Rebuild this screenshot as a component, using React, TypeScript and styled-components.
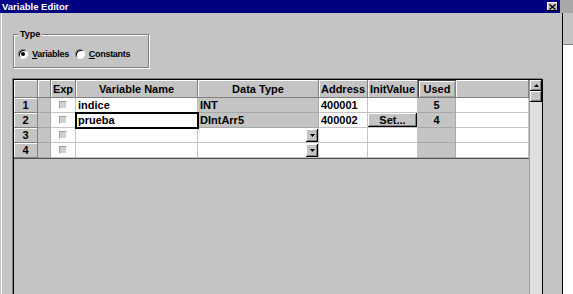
import React from "react";
import styled, { createGlobalStyle, css } from "styled-components";

const FACE = "#c4c4c4";
const SHADOW = "#808080";
const COLS = "24px 13px 25px 122px 121px 49px 50px 38px 1fr";

const GlobalStyle = createGlobalStyle`
  html, body {
    margin: 0;
    padding: 0;
    background: #ffffff;
  }
  body {
    font-family: "Liberation Sans", Arial, sans-serif;
    font-size: 11px;
    font-weight: 700;
    color: #000000;
  }
`;

const Screen = styled.div`
  display: flex;
  width: 573px;
  height: 294px;
  overflow: hidden;
`;

const Dialog = styled.div`
  width: 563px;
  flex: none;
  display: flex;
  flex-direction: column;
  background: #a8a8a8;
`;

const TitleBar = styled.div`
  width: 560px;
  height: 13px;
  flex: none;
  display: flex;
  align-items: center;
  justify-content: space-between;
  box-sizing: border-box;
  padding: 0 2px 0 2px;
  background: #000080;
  color: #ffffff;
  font-size: 9.5px;
  line-height: 13px;
`;

const CloseButton = styled.div`
  width: 11px;
  height: 9px;
  display: flex;
  align-items: center;
  justify-content: center;
  background: ${FACE};
  box-shadow: inset -1px -1px 0 #000000, inset 1px 1px 0 #ffffff;
`;

const DialogBody = styled.div`
  flex: 1;
  display: flex;
  flex-direction: column;
  align-items: flex-start;
  padding: 15px 0 0 13px;
  background: ${FACE};
  border-right: 1px solid #000000;
  box-shadow: inset 1px 0 0 ${FACE}, inset 2px 0 0 #ffffff;
`;

const GroupBox = styled.fieldset`
  margin: 0;
  min-width: 0;
  width: 136px;
  box-sizing: border-box;
  padding: 8px 0 7px 4px;
  border: 1px solid ${SHADOW};
  box-shadow: inset 1px 1px 0 #ffffff, 1px 1px 0 #ffffff;
  font-size: 9px;
  letter-spacing: -0.3px;
`;

const Legend = styled.legend`
  margin-left: 0;
  padding: 0 2px;
  line-height: 12px;
  letter-spacing: 0;
  background: ${FACE};
`;

const RadioRow = styled.div`
  display: flex;
  align-items: center;
  height: 12px;
`;

const RadioOption = styled.label`
  display: flex;
  align-items: center;
  gap: 4px;
  margin-right: 6px;
`;

const RadioCircle = styled.span<{ $checked?: boolean }>`
  width: 10px;
  height: 10px;
  box-sizing: border-box;
  border-radius: 50%;
  background: #ffffff;
  border: 1px solid;
  border-color: ${SHADOW} #ffffff #ffffff ${SHADOW};
  box-shadow: inset 1px 1px 0 #000000;
  display: flex;
  align-items: center;
  justify-content: center;
  &::after {
    content: "";
    width: 4px;
    height: 4px;
    border-radius: 50%;
    background: ${(p) => (p.$checked ? "#000000" : "transparent")};
  }
`;

const GridFrame = styled.div`
  margin-top: 11px;
  width: 530px;
  height: 240px;
  flex: none;
  box-sizing: border-box;
  display: flex;
  border: 1px solid #000000;
  box-shadow: -1px -1px 0 ${SHADOW};
`;

const GridArea = styled.div`
  flex: 1;
  display: flex;
  flex-direction: column;
  background: ${FACE};
`;

const Rows = styled.div`
  display: flex;
  flex-direction: column;
  border-bottom: 1px solid #505050;
`;

const Row = styled.div<{ $h: number }>`
  display: grid;
  grid-template-columns: ${COLS};
  height: ${(p) => p.$h}px;
`;

type Kind = "head" | "used-head" | "rowhead" | "white" | "gray";

const Cell = styled.div<{ $kind: Kind; $align?: string; $focus?: boolean; $pad?: boolean }>`
  display: flex;
  align-items: center;
  justify-content: ${(p) => p.$align || "flex-start"};
  box-sizing: border-box;
  padding-left: ${(p) => (p.$pad ? "2px" : "0")};
  overflow: hidden;
  white-space: nowrap;
  line-height: 12px;
  ${(p) =>
    p.$kind === "head" || p.$kind === "rowhead"
      ? css`
          background: ${FACE};
          border-right: 1px solid ${SHADOW};
          border-bottom: 1px solid ${SHADOW};
          box-shadow: inset 1px 1px 0 #ffffff;
        `
      : p.$kind === "used-head"
      ? css`
          background: ${FACE};
          border: 1px solid ${SHADOW};
          border-top-color: #404040;
          border-left-color: #404040;
          box-shadow: inset 1px 1px 0 #ffffff, inset -1px -1px 0 #a0a0a0;
        `
      : p.$kind === "gray"
      ? css`
          background: ${FACE};
          border-right: 1px solid #a8a8a8;
          border-bottom: 1px solid #a8a8a8;
        `
      : css`
          background: #ffffff;
          border-right: 1px solid #c4c4c4;
          border-bottom: 1px solid #c4c4c4;
        `}
  ${(p) =>
    p.$focus &&
    css`
      position: relative;
      z-index: 1;
      outline: 2px solid #000000;
      outline-offset: -1px;
    `}
`;

const CheckBox = styled.span`
  width: 8px;
  height: 8px;
  box-sizing: border-box;
  background: #d0d0d0;
  border: 1px solid;
  border-color: #a0a0a0 #ffffff #ffffff #a0a0a0;
`;

const DropButton = styled.span`
  width: 12px;
  height: 13px;
  box-sizing: border-box;
  display: flex;
  align-items: center;
  justify-content: center;
  background: ${FACE};
  box-shadow: inset -1px -1px 0 #000000, inset 1px 1px 0 #ffffff, inset -2px -2px 0 ${SHADOW};
`;

const CellButton = styled.span`
  flex: 1;
  align-self: stretch;
  display: flex;
  align-items: center;
  justify-content: center;
  background: ${FACE};
  box-shadow: inset -1px -1px 0 #000000, inset 1px 1px 0 #ffffff, inset -2px -2px 0 ${SHADOW};
`;

const ScrollBar = styled.div`
  width: 12px;
  flex: none;
  display: flex;
  flex-direction: column;
  border-left: 1px solid #a0a0a0;
  background: #dedede;
`;

const ScrollButton = styled.div<{ $h: number }>`
  height: ${(p) => p.$h}px;
  flex: none;
  display: flex;
  align-items: center;
  justify-content: center;
  background: ${FACE};
  box-shadow: inset -1px -1px 0 #000000, inset 1px 1px 0 #ffffff, inset -2px -2px 0 ${SHADOW};
`;

const BackWindow = styled.div`
  flex: 1;
  display: flex;
  flex-direction: column;
  background: #ffffff;
`;

const BackStrip = styled.div<{ $h: number; $bg: string }>`
  height: ${(p) => p.$h}px;
  flex: none;
  background: ${(p) => p.$bg};
`;

const DownArrow = () => (
  <svg width="5" height="3" viewBox="0 0 5 3">
    <path d="M0 0h5L2.5 3z" fill="#000" />
  </svg>
);

const UpArrow = () => (
  <svg width="5" height="3" viewBox="0 0 5 3">
    <path d="M0 3h5L2.5 0z" fill="#000" />
  </svg>
);

type VarRow = {
  num: number;
  name: string;
  type: string;
  address: string;
  init: "" | "button";
  used: string;
  filled: boolean;
};

const rows: VarRow[] = [
  { num: 1, name: "indice", type: "INT", address: "400001", init: "", used: "5", filled: true },
  { num: 2, name: "prueba", type: "DIntArr5", address: "400002", init: "button", used: "4", filled: true },
  { num: 3, name: "", type: "", address: "", init: "", used: "", filled: false },
  { num: 4, name: "", type: "", address: "", init: "", used: "", filled: false },
];

export default function App() {
  return (
    <>
      <GlobalStyle />
      <Screen>
        <Dialog>
          <TitleBar>
            <span>Variable Editor</span>
            <CloseButton>
              <svg width="7" height="6" viewBox="0 0 7 6">
                <path d="M0.5 0.5l6 5M6.5 0.5l-6 5" stroke="#000" strokeWidth="1.4" />
              </svg>
            </CloseButton>
          </TitleBar>
          <DialogBody>
            <GroupBox>
              <Legend>Type</Legend>
              <RadioRow>
                <RadioOption>
                  <RadioCircle $checked />
                  <span>
                    <u>V</u>ariables
                  </span>
                </RadioOption>
                <RadioOption>
                  <RadioCircle />
                  <span>
                    <u>C</u>onstants
                  </span>
                </RadioOption>
              </RadioRow>
            </GroupBox>
            <GridFrame>
              <GridArea>
                <Row $h={18}>
                  <Cell $kind="head" />
                  <Cell $kind="head" />
                  <Cell $kind="head" $align="center">Exp</Cell>
                  <Cell $kind="head" $align="center">Variable Name</Cell>
                  <Cell $kind="head" $align="center">Data Type</Cell>
                  <Cell $kind="head" $align="center">Address</Cell>
                  <Cell $kind="head" $align="center">InitValue</Cell>
                  <Cell $kind="used-head" $align="center">Used</Cell>
                  <Cell $kind="head" />
                </Row>
                <Rows>
                  {rows.map((r) => (
                    <Row key={r.num} $h={15}>
                      <Cell $kind="rowhead" $align="center">{r.num}</Cell>
                      <Cell $kind="gray" />
                      <Cell $kind="white" $align="center">
                        <CheckBox />
                      </Cell>
                      <Cell $kind="white" $pad $focus={r.num === 2}>
                        {r.name}
                      </Cell>
                      {r.filled ? (
                        <Cell $kind="gray" $pad>{r.type}</Cell>
                      ) : (
                        <Cell $kind="white" $align="flex-end">
                          <DropButton>
                            <DownArrow />
                          </DropButton>
                        </Cell>
                      )}
                      <Cell $kind="white" $pad>{r.address}</Cell>
                      <Cell $kind="white">
                        {r.init === "button" && <CellButton>Set...</CellButton>}
                      </Cell>
                      <Cell $kind="gray" $align="center">{r.used}</Cell>
                      <Cell $kind="white" />
                    </Row>
                  ))}
                </Rows>
              </GridArea>
              <ScrollBar>
                <ScrollButton $h={11}>
                  <UpArrow />
                </ScrollButton>
                <ScrollButton $h={11} />
              </ScrollBar>
            </GridFrame>
          </DialogBody>
        </Dialog>
        <BackWindow>
          <BackStrip $h={13} $bg="#a8a8a8" />
          <BackStrip $h={31} $bg={FACE} />
          <BackStrip $h={1} $bg={SHADOW} />
        </BackWindow>
      </Screen>
    </>
  );
}
